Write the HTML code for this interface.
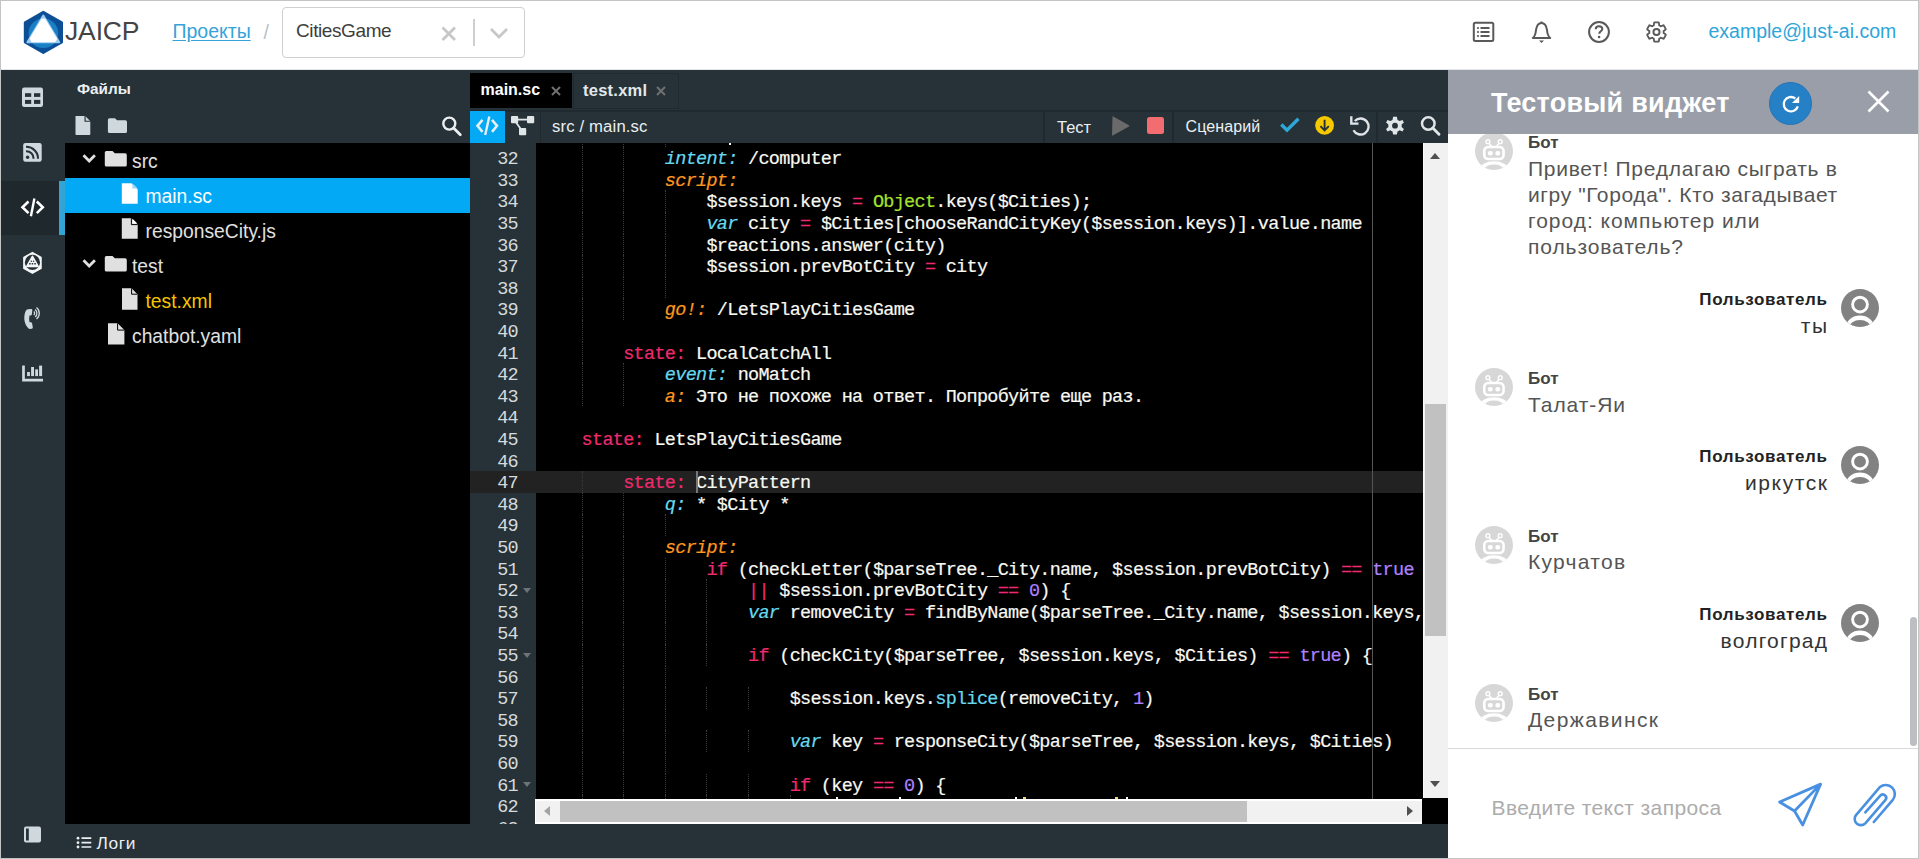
<!DOCTYPE html>
<html><head><meta charset="utf-8">
<style>
*{box-sizing:border-box;margin:0;padding:0}
html,body{width:1919px;height:859px;overflow:hidden;background:#fff;font-family:"Liberation Sans",sans-serif}
.a{position:absolute}
.t{position:absolute;white-space:pre;line-height:1}
#frame{position:absolute;left:0;top:0;width:1919px;height:859px;border:1px solid #c4c4c4;z-index:50;pointer-events:none}
/* header */
#hdr{left:0;top:0;width:1919px;height:70px;background:#fff;border-bottom:1px solid #e3e6e8}
/* dark */
#dark{left:0;top:70px;width:1448px;height:789px;background:#263238}
#rail{left:0;top:70px;width:65px;height:789px;background:#263238}
#tree{left:65px;top:143px;width:405px;height:681px;background:#000}
.row{position:absolute;left:65px;width:405px;height:35px}
.lbl{position:absolute;white-space:pre;font-size:19.3px;color:#e0e0e0;line-height:1}
/* code */
#gutter{left:470px;top:143px;width:66px;height:681px;background:#263238;overflow:hidden}
#code{left:536px;top:143px;width:887px;height:656px;background:#000;overflow:hidden}
.ln{position:absolute;margin-top:2px;left:0;width:48px;text-align:right;font-family:"Liberation Mono",monospace;font-size:18.5px;letter-spacing:-0.7px;line-height:21.6px;height:21.6px;color:#d5dadd}
.cl{position:absolute;margin-top:2px;left:4px;white-space:pre;font-family:"Liberation Mono",monospace;font-size:18.5px;letter-spacing:-0.7px;line-height:21.6px;height:21.6px;color:#f8f8f2;-webkit-text-stroke:0.2px currentColor}
.k{color:#ef2a6e}.c{color:#66d9ef;font-style:italic}.o{color:#fd971f;font-style:italic}.g{color:#a6e22e}.p{color:#ae81ff}.s{color:#66d9ef}.y{color:#e6db74}
.ig{position:absolute;width:0;border-left:1px dotted #3a3a3a}
.fold{position:absolute;left:523px;width:0;height:0;border-left:4px solid transparent;border-right:4px solid transparent;border-top:5px solid #6d7478}
/* widget */
#wid{left:1448px;top:70px;width:471px;height:789px;background:#fff}
.name{position:absolute;white-space:pre;font-weight:700;font-size:17px;line-height:1}
.msg{position:absolute;white-space:pre;font-size:21px;letter-spacing:0.7px;line-height:26px;color:#555}
</style></head><body>
<div id="frame"></div>

<!-- HEADER -->
<div id="hdr" class="a"></div>
<svg class="a" style="left:0;top:0" width="80" height="70" viewBox="0 0 80 70">
  <polygon points="43.3,12 61.8,22.6 61.8,42.2 43.3,52.8 25,42.2 25,22.6" fill="#0c4f97" stroke="#0c4f97" stroke-width="2.4" stroke-linejoin="round"/>
  <circle cx="43.4" cy="33.2" r="14.8" fill="#1a80c6"/>
  <defs><clipPath id="cc"><circle cx="43.4" cy="33.2" r="14.8"/></clipPath></defs>
  <polygon points="43.3,15.6 59.2,42.2 27.4,42.2" fill="#9acbf0" stroke="#9acbf0" stroke-width="2" stroke-linejoin="round"/>
  <polygon points="43.3,15.6 59.2,42.2 27.4,42.2" fill="#fff" clip-path="url(#cc)"/>
</svg>
<div class="t" style="left:65px;top:17.6px;font-size:26.5px;color:#444;letter-spacing:-0.15px">JAICP</div>
<div class="t" style="left:172.5px;top:21.5px;font-size:19.5px;color:#35a3d9;text-decoration:underline;text-underline-offset:2px">Проекты</div>
<div class="t" style="left:263.5px;top:22.8px;font-size:19.5px;color:#b8c2c8">/</div>
<div class="a" style="left:282px;top:7px;width:243px;height:51px;border:1px solid #cfcfcf;border-radius:4px;background:#fff"></div>
<div class="t" style="left:296px;top:20.6px;font-size:19px;letter-spacing:-0.4px;color:#3d3d3d">CitiesGame</div>
<svg class="a" style="left:438px;top:23px" width="22" height="22" viewBox="0 0 22 22"><path d="M4.5 4.5 L17 17 M17 4.5 L4.5 17" stroke="#c7c7c7" stroke-width="2.8"/></svg>
<div class="a" style="left:473px;top:19px;width:2px;height:27px;background:#cfcfcf"></div>
<svg class="a" style="left:488px;top:25px" width="22" height="16" viewBox="0 0 22 16"><path d="M3 4 L11 12 L19 4" stroke="#c7c7c7" stroke-width="2.8" fill="none"/></svg>
<!-- header icons -->
<svg class="a" style="left:1472px;top:21px" width="23" height="22" viewBox="0 0 23 22"><rect x="1.8" y="1.8" width="19.5" height="18.3" rx="1.5" fill="none" stroke="#595959" stroke-width="2"/><circle cx="6" cy="7" r="1.1" fill="#595959"/><circle cx="6" cy="11" r="1.1" fill="#595959"/><circle cx="6" cy="15" r="1.1" fill="#595959"/><path d="M8.5 7h9M8.5 11h9M8.5 15h9" stroke="#595959" stroke-width="1.9"/></svg>
<svg class="a" style="left:1530px;top:20px" width="23" height="24" viewBox="0 0 23 24"><path d="M11.5 1.5 v1.5 M11.5 3 C7.5 3 6.5 6.5 6 10 C5.6 14.5 4.8 16.5 2.8 18 H20.2 C18.2 16.5 17.4 14.5 17 10 C16.5 6.5 15.5 3 11.5 3 Z" fill="none" stroke="#595959" stroke-width="2" stroke-linejoin="round"/><path d="M9 20.5 h5 l-2.5 2.5z" fill="#595959"/></svg>
<svg class="a" style="left:1587px;top:20px" width="24" height="24" viewBox="0 0 24 24"><circle cx="12" cy="12" r="9.9" fill="none" stroke="#595959" stroke-width="2"/><path d="M8.7 9.2 C8.7 7.2 10.2 6.2 12 6.2 C13.8 6.2 15.3 7.3 15.3 9 C15.3 11.2 12.2 11.4 12.2 13.8" fill="none" stroke="#595959" stroke-width="2"/><circle cx="12.1" cy="17" r="1.3" fill="#595959"/></svg>
<svg class="a" style="left:1645px;top:20px" width="23" height="24" viewBox="0 0 24 24"><path d="M19.4 13c.04-.3.06-.65.06-1s-.02-.7-.06-1l2.1-1.65c.19-.15.24-.42.12-.64l-2-3.46c-.12-.22-.39-.3-.61-.22l-2.49 1c-.52-.4-1.08-.73-1.69-.98l-.38-2.65C14.46 2.18 14.25 2 14 2h-4c-.25 0-.46.18-.49.42l-.38 2.65c-.61.25-1.17.59-1.69.98l-2.49-1c-.23-.09-.49 0-.61.22l-2 3.46c-.13.22-.07.49.12.64L4.57 11c-.04.32-.07.66-.07 1s.03.68.07 1l-2.11 1.65c-.19.15-.24.42-.12.64l2 3.46c.12.22.39.3.61.22l2.49-1c.52.4 1.08.73 1.69.98l.38 2.65c.03.24.24.42.49.42h4c.25 0 .46-.18.49-.42l.38-2.65c.61-.25 1.17-.59 1.69-.98l2.49 1c.23.09.49 0 .61-.22l2-3.46c.12-.22.07-.49-.12-.64L19.4 13z" fill="none" stroke="#595959" stroke-width="1.9"/><circle cx="12" cy="12" r="3.2" fill="none" stroke="#595959" stroke-width="2"/></svg>
<div class="t" style="left:1708.5px;top:21.5px;font-size:19.5px;color:#2da5d9">example@just-ai.com</div>

<!-- DARK AREA -->
<div id="dark" class="a"></div>
<!-- rail -->
<div class="a" style="left:0;top:181px;width:65px;height:54px;background:#1f282d"></div>
<div class="a" style="left:59px;top:181px;width:6px;height:54px;background:#32a5d6"></div>
<svg class="a" style="left:20px;top:85px" width="26" height="25" viewBox="0 0 26 25"><rect x="2" y="2.5" width="21" height="19.5" rx="2.2" fill="#cfd8dc"/><rect x="5" y="8.2" width="6.2" height="3.7" fill="#263238"/><rect x="14" y="8.2" width="6.3" height="3.7" fill="#263238"/><rect x="5" y="14.9" width="6.2" height="4" fill="#263238"/><rect x="14" y="14.9" width="6.3" height="4" fill="#263238"/></svg>
<svg class="a" style="left:20px;top:140px" width="26" height="25" viewBox="0 0 26 25"><rect x="3.2" y="3.1" width="18.5" height="18.7" rx="2.2" fill="#cfd8dc"/><circle cx="7.6" cy="17.3" r="1.7" fill="#263238"/><path d="M6 11.2 A7.3 7.3 0 0 1 13.6 18.8" fill="none" stroke="#263238" stroke-width="2.1"/><path d="M6 6.8 A11.7 11.7 0 0 1 18 18.8" fill="none" stroke="#263238" stroke-width="2.1"/></svg>
<svg class="a" style="left:20px;top:195px" width="26" height="25" viewBox="0 0 26 25"><path d="M8.5 6.5 L2.5 12.3 L8.5 18.1 M16.8 6.5 L22.8 12.3 L16.8 18.1" fill="none" stroke="#fff" stroke-width="2.6"/><path d="M14.4 3.5 L10.9 21.3" stroke="#fff" stroke-width="2.4"/></svg>
<svg class="a" style="left:20px;top:250px" width="26" height="26" viewBox="0 0 26 26"><polygon points="12.44,2.6 21,7.4 21,18.4 12.44,23.2 3.9,18.4 3.9,7.4" fill="#f4f6f7" stroke="#f4f6f7" stroke-width="1.5" stroke-linejoin="round"/><circle cx="12.44" cy="12.4" r="7.6" fill="#263238"/><polygon points="12.44,6.3 18.1,16.4 6.8,16.4" fill="#f4f6f7" stroke="#f4f6f7" stroke-width="1.6" stroke-linejoin="round"/><g fill="#263238"><circle cx="11.3" cy="11.2" r="0.7"/><circle cx="13.6" cy="11.2" r="0.7"/><rect x="9.1" y="13" width="1.5" height="1.5"/><rect x="11.7" y="13" width="1.5" height="1.5"/><rect x="14.3" y="13" width="1.5" height="1.5"/></g></svg>
<svg class="a" style="left:20px;top:305px" width="26" height="26" viewBox="0 0 26 26"><path d="M6.9 4.6 Q8.2 3.9 11.2 4 Q12.5 4.1 12.3 5.2 L11.8 9.6 Q11.6 10.5 10.7 10.5 L9.5 10.6 Q8.8 13.9 9.5 17.3 L10.8 17.3 Q11.7 17.3 12 18.1 L12.8 22.3 Q12.9 23.5 11.9 23.8 L9.2 24 Q4.9 20.7 4.3 14.3 Q4.1 7.2 6.9 4.6 Z" fill="#cfd8dc"/><path d="M13.84 6.46 A2.6 2.6 0 0 1 13.84 10.14 M15.15 4.55 A4.9 4.9 0 0 1 15.15 12.05 M16.49 2.55 A7.3 7.3 0 0 1 16.49 14.05" fill="none" stroke="#cfd8dc" stroke-width="1.3"/></svg>
<svg class="a" style="left:20px;top:362px" width="26" height="24" viewBox="0 0 26 24"><path d="M3.5 3.6 V18.2 H23" fill="none" stroke="#cfd8dc" stroke-width="2.7"/><rect x="7.1" y="10" width="2.8" height="4.1" fill="#cfd8dc"/><rect x="11.1" y="5" width="2.9" height="9.1" fill="#cfd8dc"/><rect x="15.2" y="7.4" width="2.8" height="6.7" fill="#cfd8dc"/><rect x="19.1" y="3.6" width="3" height="10.5" fill="#cfd8dc"/></svg>
<svg class="a" style="left:20px;top:823px" width="26" height="24" viewBox="0 0 26 24"><rect x="4" y="3.5" width="17" height="16" rx="2" fill="#cfd8dc"/><rect x="6" y="5.5" width="2.8" height="12" fill="#263238"/></svg>

<!-- file panel -->
<div class="t" style="left:77px;top:80.7px;font-size:15.3px;font-weight:700;color:#eceff1">Файлы</div>
<svg class="a" style="left:73px;top:114px" width="20" height="23" viewBox="0 0 20 23"><path d="M2.5 2 H11.5 L17.3 7.8 V20.3 Q17.3 21 16.6 21 H3.2 Q2.5 21 2.5 20.3 Z" fill="#cfd8dc"/><path d="M11.5 2 V7.8 H17.3" fill="#263238"/><path d="M12.7 2.6 L16.8 6.7 H12.7 Z" fill="#cfd8dc"/></svg>
<svg class="a" style="left:106px;top:116px" width="24" height="20" viewBox="0 0 24 20"><path d="M1.9 3.8 Q1.9 2.2 3.5 2.2 H9 L11 4.3 H19.4 Q21 4.3 21 5.9 V15.5 Q21 17 19.4 17 H3.5 Q1.9 17 1.9 15.5 Z" fill="#cfd8dc"/></svg>
<svg class="a" style="left:440px;top:114px" width="24" height="24" viewBox="0 0 24 24"><circle cx="9.3" cy="9.6" r="6" fill="none" stroke="#eceff1" stroke-width="2.4"/><path d="M13.6 14 L20.3 20.7" stroke="#eceff1" stroke-width="2.8" stroke-linecap="round"/></svg>
<div id="tree" class="a"></div>
<div class="a" style="left:65px;top:178px;width:405px;height:35px;background:#03a9f4"></div>
<svg class="a" style="left:65px;top:143px" width="405" height="210" viewBox="0 0 405 210">
  <defs>
    <g id="chev"><path d="M0 0 L6.7 6.7 L13.4 0" fill="none" stroke-width="3"/></g>
  </defs>
  <!-- row0 src -->
  <path d="M18.5 12.3 L24.2 18 L29.9 12.3" fill="none" stroke="#e0e0e0" stroke-width="2.8"/>
  <path d="M39.8 9.6 Q39.8 8 41.4 8 H47.5 L49.8 10.3 H60.2 Q61.8 10.3 61.8 11.9 V22 Q61.8 23.6 60.2 23.6 H41.4 Q39.8 23.6 39.8 22 Z" fill="#e0e0e0"/>
  <!-- row3 test -->
  <path d="M18.5 117.3 L24.2 123 L29.9 117.3" fill="none" stroke="#e0e0e0" stroke-width="2.8"/>
  <path d="M39.8 114.6 Q39.8 113 41.4 113 H47.5 L49.8 115.3 H60.2 Q61.8 115.3 61.8 116.9 V127 Q61.8 128.6 60.2 128.6 H41.4 Q39.8 128.6 39.8 127 Z" fill="#e0e0e0"/>
  <!-- file icons -->
  <path d="M56.8 40.3 H66.4 L72.7 46.6 V60.8 H56.8 Z" fill="#fff"/><path d="M67.4 40.3 L72.7 45.6 H67.4 Z" fill="#9ad8f7"/>
  <path d="M56.8 75.3 H66.4 L72.7 81.6 V95.8 H56.8 Z" fill="#e0e0e0"/><path d="M67.6 75.8 L72.3 80.5 H67.6 Z" fill="#fff"/><path d="M66.4 75.3 V81.6 H72.7" fill="none" stroke="#000" stroke-width="1"/>
  <path d="M57 145.3 H66.6 L72.5 151.2 V166.8 H57 Z" fill="#e0e0e0"/><path d="M66.6 145.3 V151.2 H72.5" fill="none" stroke="#000" stroke-width="1"/>
  <path d="M43 180.3 H52.6 L59.4 187.1 V201.6 H43 Z" fill="#e0e0e0"/><path d="M52.6 180.3 V187.1 H59.4" fill="none" stroke="#000" stroke-width="1"/>
</svg>
<div class="lbl" style="left:132px;top:151.5px">src</div>
<div class="lbl" style="left:145.5px;top:186.5px;color:#fff">main.sc</div>
<div class="lbl" style="left:145.5px;top:221.5px">responseCity.js</div>
<div class="lbl" style="left:132px;top:256.5px">test</div>
<div class="lbl" style="left:145.5px;top:291.5px;color:#f5c400">test.xml</div>
<div class="lbl" style="left:132px;top:326.5px">chatbot.yaml</div>

<!-- EDITOR -->

<div class="a" style="left:470px;top:73px;width:102px;height:35px;background:#000"></div>
<div class="t" style="left:480.5px;top:82.2px;font-size:16px;font-weight:700;color:#fff">main.sc</div>
<svg class="a" style="left:550px;top:85px" width="12" height="12" viewBox="0 0 12 12"><path d="M2 2 L10 10 M10 2 L2 10" stroke="#707070" stroke-width="2"/></svg>
<div class="a" style="left:573px;top:72.5px;width:106px;height:36px;border:1px solid #1f292e;background:#263238"></div>
<div class="t" style="left:583px;top:82px;font-size:16.5px;font-weight:700;letter-spacing:0.25px;color:#e3e8eb">test.xml</div>
<svg class="a" style="left:655px;top:85px" width="12" height="12" viewBox="0 0 12 12"><path d="M2 2 L10 10 M10 2 L2 10" stroke="#707070" stroke-width="2"/></svg>
<div class="a" style="left:470px;top:109.5px;width:978px;height:2px;background:#20292e"></div>
<!-- toolbar -->
<div class="a" style="left:470px;top:111px;width:35px;height:32px;background:#03a9f4"></div>
<svg class="a" style="left:473px;top:113px" width="30" height="26" viewBox="0 0 30 26"><path d="M9.5 6.8 L4.5 12.8 L9.5 18.8 M19 6.8 L24 12.8 L19 18.8" fill="none" stroke="#e4eef3" stroke-width="2.6"/><path d="M16.3 3.5 L12.2 22" stroke="#e4eef3" stroke-width="2.4"/></svg>
<svg class="a" style="left:508px;top:113px" width="30" height="26" viewBox="0 0 30 26"><rect x="3" y="3" width="7.2" height="7.2" rx="1" fill="#e0e5e8"/><rect x="19" y="3" width="7.2" height="7.2" rx="1" fill="#e0e5e8"/><rect x="11" y="15" width="7.2" height="7.2" rx="1" fill="#e0e5e8"/><path d="M8 6.6 H20" stroke="#e0e5e8" stroke-width="1.8"/><path d="M7 8 L13.5 17" stroke="#e0e5e8" stroke-width="1.8"/></svg>
<div class="a" style="left:540px;top:111px;width:1px;height:32px;background:#20292e"></div>
<div class="t" style="left:552px;top:119.2px;font-size:16.7px;letter-spacing:0.15px;color:#eceff1">src / main.sc</div>
<div class="a" style="left:1043px;top:111px;width:2px;height:32px;background:#20292e"></div>
<div class="t" style="left:1057px;top:119px;font-size:16.5px;color:#eceff1">Тест</div>
<svg class="a" style="left:1108px;top:113px" width="26" height="26" viewBox="0 0 26 26"><path d="M4.5 3.5 Q4 3 4.8 3.3 L21 12.2 Q21.8 12.8 21 13.4 L4.8 22.4 Q4 22.8 4 22 Z" fill="#6a6a6a"/></svg>
<div class="a" style="left:1147px;top:117px;width:17px;height:17px;border-radius:2.5px;background:#f26c70"></div>
<div class="a" style="left:1172px;top:111px;width:2px;height:32px;background:#20292e"></div>
<div class="t" style="left:1185.5px;top:119.3px;font-size:16px;letter-spacing:0.1px;color:#eceff1">Сценарий</div>
<svg class="a" style="left:1277px;top:114px" width="26" height="22" viewBox="0 0 26 22"><path d="M4.3 10.5 L10 16.2 L21.5 4.7" fill="none" stroke="#2ea8d8" stroke-width="3.4"/></svg>
<svg class="a" style="left:1313px;top:114px" width="24" height="24" viewBox="0 0 24 24"><circle cx="11.6" cy="11.4" r="9.4" fill="#f5c800"/><path d="M11.6 5.8 V16.3 M7.4 12.1 L11.6 16.3 L15.8 12.1" fill="none" stroke="#263238" stroke-width="1.9"/></svg>
<svg class="a" style="left:1347px;top:113px" width="26" height="26" viewBox="0 0 26 26"><path d="M7.8 8 A8 8 0 1 1 6.5 17.2" fill="none" stroke="#e0e5e8" stroke-width="2.4"/><path d="M4.3 3.2 V10.6 H11.5" fill="none" stroke="#e0e5e8" stroke-width="2.4"/></svg>
<div class="a" style="left:1376px;top:111px;width:2px;height:32px;background:#20292e"></div>
<svg class="a" style="left:1383px;top:114px" width="24" height="24" viewBox="0 0 24 24"><path d="M12 1.6 L13.9 1.6 L14.5 4.7 A7.6 7.6 0 0 1 16.6 5.9 L19.5 4.8 L20.9 7.2 L18.6 9.3 A7.6 7.6 0 0 1 18.6 11.7 L20.9 13.8 L19.5 16.2 L16.6 15.1 A7.6 7.6 0 0 1 14.5 16.3 L13.9 19.4 H10.1 L9.5 16.3 A7.6 7.6 0 0 1 7.4 15.1 L4.5 16.2 L3.1 13.8 L5.4 11.7 A7.6 7.6 0 0 1 5.4 9.3 L3.1 7.2 L4.5 4.8 L7.4 5.9 A7.6 7.6 0 0 1 9.5 4.7 L10.1 1.6 Z" fill="#e0e5e8" transform="translate(0,1.2)"/><circle cx="12" cy="11.7" r="2.9" fill="#263238"/></svg>
<svg class="a" style="left:1418px;top:113px" width="26" height="26" viewBox="0 0 26 26"><circle cx="10.3" cy="10.5" r="6.3" fill="none" stroke="#e0e5e8" stroke-width="2.5"/><path d="M14.8 15 L21 21.2" stroke="#e0e5e8" stroke-width="2.9" stroke-linecap="round"/></svg>

<!-- gutter + code -->
<div id="gutter" class="a">
<div class="a" style="left:0;top:328.2px;width:66px;height:21.6px;background:#222"></div>
<div class="ln" style="top:-17.4px">31</div>
<div class="ln" style="top:4.2px">32</div>
<div class="ln" style="top:25.8px">33</div>
<div class="ln" style="top:47.4px">34</div>
<div class="ln" style="top:69.0px">35</div>
<div class="ln" style="top:90.6px">36</div>
<div class="ln" style="top:112.2px">37</div>
<div class="ln" style="top:133.8px">38</div>
<div class="ln" style="top:155.4px">39</div>
<div class="ln" style="top:177.0px">40</div>
<div class="ln" style="top:198.6px">41</div>
<div class="ln" style="top:220.2px">42</div>
<div class="ln" style="top:241.8px">43</div>
<div class="ln" style="top:263.4px">44</div>
<div class="ln" style="top:285.0px">45</div>
<div class="ln" style="top:306.6px">46</div>
<div class="ln" style="top:328.2px">47</div>
<div class="ln" style="top:349.8px">48</div>
<div class="ln" style="top:371.4px">49</div>
<div class="ln" style="top:393.0px">50</div>
<div class="ln" style="top:414.6px">51</div>
<div class="ln" style="top:436.2px">52</div>
<div class="ln" style="top:457.8px">53</div>
<div class="ln" style="top:479.4px">54</div>
<div class="ln" style="top:501.0px">55</div>
<div class="ln" style="top:522.6px">56</div>
<div class="ln" style="top:544.2px">57</div>
<div class="ln" style="top:565.8px">58</div>
<div class="ln" style="top:587.4px">59</div>
<div class="ln" style="top:609.0px">60</div>
<div class="ln" style="top:630.6px">61</div>
<div class="ln" style="top:652.2px">62</div>
<div class="ln" style="top:673.8px">63</div>
</div>
<div class="fold" style="top:587.7px"></div>
<div class="fold" style="top:652.5px"></div>
<div class="fold" style="top:782.1px"></div>
<div id="code" class="a">
<div class="a" style="left:0;top:328.2px;width:887px;height:21.6px;background:#222"></div>
<div class="a" style="left:836px;top:0;width:1px;height:656px;background:#555"></div>
<div class="ig" style="left:45.6px;top:-17.4px;height:21.6px"></div>
<div class="ig" style="left:87.2px;top:-17.4px;height:21.6px"></div>
<div class="ig" style="left:128.8px;top:-17.4px;height:21.6px"></div>
<div class="a" style="left:193px;top:0px;width:2px;height:2px;background:#f8f8f2"></div>
<div class="ig" style="left:45.6px;top:4.2px;height:21.6px"></div>
<div class="ig" style="left:87.2px;top:4.2px;height:21.6px"></div>
<div class="cl" style="top:4.2px">            <span class="c">intent:</span> /computer</div>
<div class="ig" style="left:45.6px;top:25.8px;height:21.6px"></div>
<div class="ig" style="left:87.2px;top:25.8px;height:21.6px"></div>
<div class="cl" style="top:25.8px">            <span class="o">script:</span></div>
<div class="ig" style="left:45.6px;top:47.4px;height:21.6px"></div>
<div class="ig" style="left:87.2px;top:47.4px;height:21.6px"></div>
<div class="ig" style="left:128.8px;top:47.4px;height:21.6px"></div>
<div class="cl" style="top:47.4px">                $session.keys <span class="k">=</span> <span class="g">Object</span>.keys($Cities);</div>
<div class="ig" style="left:45.6px;top:69.0px;height:21.6px"></div>
<div class="ig" style="left:87.2px;top:69.0px;height:21.6px"></div>
<div class="ig" style="left:128.8px;top:69.0px;height:21.6px"></div>
<div class="cl" style="top:69.0px">                <span class="c">var</span> city <span class="k">=</span> $Cities[chooseRandCityKey($session.keys)].value.name</div>
<div class="ig" style="left:45.6px;top:90.6px;height:21.6px"></div>
<div class="ig" style="left:87.2px;top:90.6px;height:21.6px"></div>
<div class="ig" style="left:128.8px;top:90.6px;height:21.6px"></div>
<div class="cl" style="top:90.6px">                $reactions.answer(city)</div>
<div class="ig" style="left:45.6px;top:112.2px;height:21.6px"></div>
<div class="ig" style="left:87.2px;top:112.2px;height:21.6px"></div>
<div class="ig" style="left:128.8px;top:112.2px;height:21.6px"></div>
<div class="cl" style="top:112.2px">                $session.prevBotCity <span class="k">=</span> city</div>
<div class="ig" style="left:45.6px;top:133.8px;height:21.6px"></div>
<div class="ig" style="left:87.2px;top:133.8px;height:21.6px"></div>
<div class="ig" style="left:128.8px;top:133.8px;height:21.6px"></div>
<div class="cl" style="top:133.8px"></div>
<div class="ig" style="left:45.6px;top:155.4px;height:21.6px"></div>
<div class="ig" style="left:87.2px;top:155.4px;height:21.6px"></div>
<div class="cl" style="top:155.4px">            <span class="o">go!:</span> /LetsPlayCitiesGame</div>
<div class="ig" style="left:45.6px;top:177.0px;height:21.6px"></div>
<div class="cl" style="top:177.0px"></div>
<div class="ig" style="left:45.6px;top:198.6px;height:21.6px"></div>
<div class="cl" style="top:198.6px">        <span class="k">state:</span> LocalCatchAll</div>
<div class="ig" style="left:45.6px;top:220.2px;height:21.6px"></div>
<div class="ig" style="left:87.2px;top:220.2px;height:21.6px"></div>
<div class="cl" style="top:220.2px">            <span class="c">event:</span> noMatch</div>
<div class="ig" style="left:45.6px;top:241.8px;height:21.6px"></div>
<div class="ig" style="left:87.2px;top:241.8px;height:21.6px"></div>
<div class="cl" style="top:241.8px">            <span class="o">a:</span> Это не похоже на ответ. Попробуйте еще раз.</div>
<div class="cl" style="top:263.4px"></div>
<div class="cl" style="top:285.0px">    <span class="k">state:</span> LetsPlayCitiesGame</div>
<div class="cl" style="top:306.6px"></div>
<div class="ig" style="left:45.6px;top:328.2px;height:21.6px"></div>
<div class="cl" style="top:328.2px">        <span class="k">state:</span> CityPattern</div>
<div class="ig" style="left:45.6px;top:349.8px;height:21.6px"></div>
<div class="ig" style="left:87.2px;top:349.8px;height:21.6px"></div>
<div class="cl" style="top:349.8px">            <span class="c">q:</span> * $City *</div>
<div class="ig" style="left:45.6px;top:371.4px;height:21.6px"></div>
<div class="ig" style="left:87.2px;top:371.4px;height:21.6px"></div>
<div class="ig" style="left:128.8px;top:371.4px;height:21.6px"></div>
<div class="cl" style="top:371.4px"></div>
<div class="ig" style="left:45.6px;top:393.0px;height:21.6px"></div>
<div class="ig" style="left:87.2px;top:393.0px;height:21.6px"></div>
<div class="cl" style="top:393.0px">            <span class="o">script:</span></div>
<div class="ig" style="left:45.6px;top:414.6px;height:21.6px"></div>
<div class="ig" style="left:87.2px;top:414.6px;height:21.6px"></div>
<div class="ig" style="left:128.8px;top:414.6px;height:21.6px"></div>
<div class="cl" style="top:414.6px">                <span class="k">if</span> (checkLetter($parseTree._City.name, $session.prevBotCity) <span class="k">==</span> <span class="p">true</span></div>
<div class="ig" style="left:45.6px;top:436.2px;height:21.6px"></div>
<div class="ig" style="left:87.2px;top:436.2px;height:21.6px"></div>
<div class="ig" style="left:128.8px;top:436.2px;height:21.6px"></div>
<div class="ig" style="left:170.4px;top:436.2px;height:21.6px"></div>
<div class="cl" style="top:436.2px">                    <span class="k">||</span> $session.prevBotCity <span class="k">==</span> <span class="p">0</span>) {</div>
<div class="ig" style="left:45.6px;top:457.8px;height:21.6px"></div>
<div class="ig" style="left:87.2px;top:457.8px;height:21.6px"></div>
<div class="ig" style="left:128.8px;top:457.8px;height:21.6px"></div>
<div class="ig" style="left:170.4px;top:457.8px;height:21.6px"></div>
<div class="cl" style="top:457.8px">                    <span class="c">var</span> removeCity <span class="k">=</span> findByName($parseTree._City.name, $session.keys, $Cities)</div>
<div class="ig" style="left:45.6px;top:479.4px;height:21.6px"></div>
<div class="ig" style="left:87.2px;top:479.4px;height:21.6px"></div>
<div class="ig" style="left:128.8px;top:479.4px;height:21.6px"></div>
<div class="ig" style="left:170.4px;top:479.4px;height:21.6px"></div>
<div class="cl" style="top:479.4px"></div>
<div class="ig" style="left:45.6px;top:501.0px;height:21.6px"></div>
<div class="ig" style="left:87.2px;top:501.0px;height:21.6px"></div>
<div class="ig" style="left:128.8px;top:501.0px;height:21.6px"></div>
<div class="ig" style="left:170.4px;top:501.0px;height:21.6px"></div>
<div class="cl" style="top:501.0px">                    <span class="k">if</span> (checkCity($parseTree, $session.keys, $Cities) <span class="k">==</span> <span class="p">true</span>) {</div>
<div class="ig" style="left:45.6px;top:522.6px;height:21.6px"></div>
<div class="ig" style="left:87.2px;top:522.6px;height:21.6px"></div>
<div class="ig" style="left:128.8px;top:522.6px;height:21.6px"></div>
<div class="cl" style="top:522.6px"></div>
<div class="ig" style="left:45.6px;top:544.2px;height:21.6px"></div>
<div class="ig" style="left:87.2px;top:544.2px;height:21.6px"></div>
<div class="ig" style="left:128.8px;top:544.2px;height:21.6px"></div>
<div class="ig" style="left:170.4px;top:544.2px;height:21.6px"></div>
<div class="ig" style="left:212.0px;top:544.2px;height:21.6px"></div>
<div class="cl" style="top:544.2px">                        $session.keys.<span class="s">splice</span>(removeCity, <span class="p">1</span>)</div>
<div class="ig" style="left:45.6px;top:565.8px;height:21.6px"></div>
<div class="ig" style="left:87.2px;top:565.8px;height:21.6px"></div>
<div class="ig" style="left:128.8px;top:565.8px;height:21.6px"></div>
<div class="cl" style="top:565.8px"></div>
<div class="ig" style="left:45.6px;top:587.4px;height:21.6px"></div>
<div class="ig" style="left:87.2px;top:587.4px;height:21.6px"></div>
<div class="ig" style="left:128.8px;top:587.4px;height:21.6px"></div>
<div class="ig" style="left:170.4px;top:587.4px;height:21.6px"></div>
<div class="ig" style="left:212.0px;top:587.4px;height:21.6px"></div>
<div class="cl" style="top:587.4px">                        <span class="c">var</span> key <span class="k">=</span> responseCity($parseTree, $session.keys, $Cities)</div>
<div class="ig" style="left:45.6px;top:609.0px;height:21.6px"></div>
<div class="ig" style="left:87.2px;top:609.0px;height:21.6px"></div>
<div class="ig" style="left:128.8px;top:609.0px;height:21.6px"></div>
<div class="cl" style="top:609.0px"></div>
<div class="ig" style="left:45.6px;top:630.6px;height:21.6px"></div>
<div class="ig" style="left:87.2px;top:630.6px;height:21.6px"></div>
<div class="ig" style="left:128.8px;top:630.6px;height:21.6px"></div>
<div class="ig" style="left:170.4px;top:630.6px;height:21.6px"></div>
<div class="ig" style="left:212.0px;top:630.6px;height:21.6px"></div>
<div class="cl" style="top:630.6px">                        <span class="k">if</span> (key <span class="k">==</span> <span class="p">0</span>) {</div>
<div class="ig" style="left:45.6px;top:652.2px;height:21.6px"></div>
<div class="ig" style="left:87.2px;top:652.2px;height:21.6px"></div>
<div class="ig" style="left:128.8px;top:652.2px;height:21.6px"></div>
<div class="ig" style="left:170.4px;top:652.2px;height:21.6px"></div>
<div class="ig" style="left:212.0px;top:652.2px;height:21.6px"></div>
<div class="ig" style="left:253.6px;top:652.2px;height:21.6px"></div>
<div class="cl" style="top:652.2px">                            $reactions.answer(<span class="y">&quot;Не знаю&quot;</span>)</div>
<div class="ig" style="left:45.6px;top:673.8px;height:21.6px"></div>
<div class="ig" style="left:87.2px;top:673.8px;height:21.6px"></div>
<div class="ig" style="left:128.8px;top:673.8px;height:21.6px"></div>
<div class="ig" style="left:170.4px;top:673.8px;height:21.6px"></div>
<div class="ig" style="left:212.0px;top:673.8px;height:21.6px"></div>
<div class="ig" style="left:253.6px;top:673.8px;height:21.6px"></div>
<div class="cl" style="top:673.8px">                            return</div>
<div class="a" style="left:300px;top:654px;width:2px;height:2px;background:#f8f8f2"></div><div class="a" style="left:363px;top:654px;width:2px;height:2px;background:#f8f8f2"></div><div class="a" style="left:479px;top:654px;width:2px;height:2px;background:#f8f8f2"></div><div class="a" style="left:487px;top:654px;width:3px;height:2px;background:#e6db74"></div><div class="a" style="left:579px;top:654px;width:3px;height:2px;background:#e6db74"></div><div class="a" style="left:590px;top:654px;width:2px;height:2px;background:#f8f8f2"></div>
<div class="a" style="left:159.5px;top:328.2px;width:2px;height:21.6px;background:#777"></div>
</div>
<!-- v scrollbar -->
<div class="a" style="left:1423px;top:143px;width:25px;height:655px;background:#f1f1f1;border-left:1px solid #fafafa"></div>
<div class="a" style="left:1425px;top:404px;width:21px;height:232px;background:#c1c1c1"></div>
<div class="a" style="left:1430px;top:153px;width:0;height:0;border-left:5.5px solid transparent;border-right:5.5px solid transparent;border-bottom:6px solid #505050"></div>
<div class="a" style="left:1430px;top:781px;width:0;height:0;border-left:5.5px solid transparent;border-right:5.5px solid transparent;border-top:6px solid #505050"></div>
<!-- h scrollbar -->
<div class="a" style="left:535px;top:799px;width:887px;height:25px;background:#f1f1f1;border:1px solid #fff;border-width:2px 0 2px 1px"></div>
<div class="a" style="left:560px;top:801px;width:687px;height:21px;background:#c1c1c1"></div>
<div class="a" style="left:544px;top:806px;width:0;height:0;border-top:5.5px solid transparent;border-bottom:5.5px solid transparent;border-right:6px solid #a3a3a3"></div>
<div class="a" style="left:1407px;top:806px;width:0;height:0;border-top:5.5px solid transparent;border-bottom:5.5px solid transparent;border-left:6px solid #505050"></div>
<div class="a" style="left:1422px;top:798px;width:26px;height:26px;background:#000"></div>
<!-- bottom bar -->
<svg class="a" style="left:75px;top:835px" width="18" height="16" viewBox="0 0 18 16"><circle cx="3" cy="3.2" r="1.4" fill="#eceff1"/><circle cx="3" cy="7.7" r="1.4" fill="#eceff1"/><circle cx="3" cy="12" r="1.4" fill="#eceff1"/><path d="M6.5 3.2 H16.3 M6.5 7.7 H16.3 M6.5 12 H16.3" stroke="#eceff1" stroke-width="1.7"/></svg>
<div class="t" style="left:96.5px;top:834.8px;font-size:17.3px;letter-spacing:0.7px;color:#eceff1">Логи</div>

<!-- WIDGET -->
<div id="wid" class="a"></div>
<div class="a" style="left:1448px;top:70px;width:471px;height:680px;overflow:hidden">
<div style="position:absolute;left:-1448px;top:-70px;width:1919px;height:859px">
<svg class="a" style="left:1474px;top:130.8px" width="40" height="40" viewBox="0 0 40 40"><defs><clipPath id="bc150_5"><circle cx="20" cy="20" r="19"/></clipPath></defs><circle cx="20" cy="20" r="19" fill="#d7d7d7"/><g clip-path="url(#bc150_5)"><circle cx="13.9" cy="10.7" r="1.9" fill="none" stroke="#fff" stroke-width="1.4"/><circle cx="26.2" cy="10.7" r="1.9" fill="none" stroke="#fff" stroke-width="1.4"/><path d="M15 12.3 L17.6 15.2 M25.1 12.3 L22.5 15.2" stroke="#fff" stroke-width="1.4"/><rect x="10.25" y="16.05" width="19.3" height="11.9" rx="4" fill="#d7d7d7" stroke="#fff" stroke-width="2.6"/><rect x="13.9" y="20" width="4.9" height="4.6" rx="2" fill="#fff"/><rect x="21.3" y="20" width="4.9" height="4.6" rx="2" fill="#fff"/><ellipse cx="20" cy="38.5" rx="14.5" ry="8.3" fill="#fff"/><ellipse cx="20" cy="38.6" rx="9.5" ry="5.1" fill="#d7d7d7"/></g></svg>
<div class="name" style="left:1528px;top:133.9px;color:#444">Бот</div>
<svg class="a" style="left:1474px;top:366.6px" width="40" height="40" viewBox="0 0 40 40"><defs><clipPath id="bc386_3"><circle cx="20" cy="20" r="19"/></clipPath></defs><circle cx="20" cy="20" r="19" fill="#d7d7d7"/><g clip-path="url(#bc386_3)"><circle cx="13.9" cy="10.7" r="1.9" fill="none" stroke="#fff" stroke-width="1.4"/><circle cx="26.2" cy="10.7" r="1.9" fill="none" stroke="#fff" stroke-width="1.4"/><path d="M15 12.3 L17.6 15.2 M25.1 12.3 L22.5 15.2" stroke="#fff" stroke-width="1.4"/><rect x="10.25" y="16.05" width="19.3" height="11.9" rx="4" fill="#d7d7d7" stroke="#fff" stroke-width="2.6"/><rect x="13.9" y="20" width="4.9" height="4.6" rx="2" fill="#fff"/><rect x="21.3" y="20" width="4.9" height="4.6" rx="2" fill="#fff"/><ellipse cx="20" cy="38.5" rx="14.5" ry="8.3" fill="#fff"/><ellipse cx="20" cy="38.6" rx="9.5" ry="5.1" fill="#d7d7d7"/></g></svg>
<div class="name" style="left:1528px;top:369.7px;color:#444">Бот</div>
<svg class="a" style="left:1474px;top:524.5px" width="40" height="40" viewBox="0 0 40 40"><defs><clipPath id="bc544_2"><circle cx="20" cy="20" r="19"/></clipPath></defs><circle cx="20" cy="20" r="19" fill="#d7d7d7"/><g clip-path="url(#bc544_2)"><circle cx="13.9" cy="10.7" r="1.9" fill="none" stroke="#fff" stroke-width="1.4"/><circle cx="26.2" cy="10.7" r="1.9" fill="none" stroke="#fff" stroke-width="1.4"/><path d="M15 12.3 L17.6 15.2 M25.1 12.3 L22.5 15.2" stroke="#fff" stroke-width="1.4"/><rect x="10.25" y="16.05" width="19.3" height="11.9" rx="4" fill="#d7d7d7" stroke="#fff" stroke-width="2.6"/><rect x="13.9" y="20" width="4.9" height="4.6" rx="2" fill="#fff"/><rect x="21.3" y="20" width="4.9" height="4.6" rx="2" fill="#fff"/><ellipse cx="20" cy="38.5" rx="14.5" ry="8.3" fill="#fff"/><ellipse cx="20" cy="38.6" rx="9.5" ry="5.1" fill="#d7d7d7"/></g></svg>
<div class="name" style="left:1528px;top:527.6px;color:#444">Бот</div>
<svg class="a" style="left:1474px;top:682.5px" width="40" height="40" viewBox="0 0 40 40"><defs><clipPath id="bc702_2"><circle cx="20" cy="20" r="19"/></clipPath></defs><circle cx="20" cy="20" r="19" fill="#d7d7d7"/><g clip-path="url(#bc702_2)"><circle cx="13.9" cy="10.7" r="1.9" fill="none" stroke="#fff" stroke-width="1.4"/><circle cx="26.2" cy="10.7" r="1.9" fill="none" stroke="#fff" stroke-width="1.4"/><path d="M15 12.3 L17.6 15.2 M25.1 12.3 L22.5 15.2" stroke="#fff" stroke-width="1.4"/><rect x="10.25" y="16.05" width="19.3" height="11.9" rx="4" fill="#d7d7d7" stroke="#fff" stroke-width="2.6"/><rect x="13.9" y="20" width="4.9" height="4.6" rx="2" fill="#fff"/><rect x="21.3" y="20" width="4.9" height="4.6" rx="2" fill="#fff"/><ellipse cx="20" cy="38.5" rx="14.5" ry="8.3" fill="#fff"/><ellipse cx="20" cy="38.6" rx="9.5" ry="5.1" fill="#d7d7d7"/></g></svg>
<div class="name" style="left:1528px;top:685.6px;color:#444">Бот</div>
<svg class="a" style="left:1840px;top:287.6px" width="40" height="40" viewBox="0 0 40 40"><defs><clipPath id="uc307_6"><circle cx="20" cy="20" r="19"/></clipPath></defs><circle cx="20" cy="20" r="19" fill="#828282"/><g clip-path="url(#uc307_6)"><circle cx="20" cy="16.6" r="7.4" fill="none" stroke="#fff" stroke-width="2.9"/><ellipse cx="20" cy="39" rx="14" ry="11.4" fill="#fff"/><ellipse cx="20" cy="40" rx="10.8" ry="8" fill="#828282"/></g></svg>
<div class="name" style="right:92px;top:290.9px;color:#222;letter-spacing:0.65px;margin-right:-0.65px">Пользователь</div>
<svg class="a" style="left:1840px;top:445.1px" width="40" height="40" viewBox="0 0 40 40"><defs><clipPath id="uc465_1"><circle cx="20" cy="20" r="19"/></clipPath></defs><circle cx="20" cy="20" r="19" fill="#828282"/><g clip-path="url(#uc465_1)"><circle cx="20" cy="16.6" r="7.4" fill="none" stroke="#fff" stroke-width="2.9"/><ellipse cx="20" cy="39" rx="14" ry="11.4" fill="#fff"/><ellipse cx="20" cy="40" rx="10.8" ry="8" fill="#828282"/></g></svg>
<div class="name" style="right:92px;top:448.4px;color:#222;letter-spacing:0.65px;margin-right:-0.65px">Пользователь</div>
<svg class="a" style="left:1840px;top:603.0px" width="40" height="40" viewBox="0 0 40 40"><defs><clipPath id="uc623_0"><circle cx="20" cy="20" r="19"/></clipPath></defs><circle cx="20" cy="20" r="19" fill="#828282"/><g clip-path="url(#uc623_0)"><circle cx="20" cy="16.6" r="7.4" fill="none" stroke="#fff" stroke-width="2.9"/><ellipse cx="20" cy="39" rx="14" ry="11.4" fill="#fff"/><ellipse cx="20" cy="40" rx="10.8" ry="8" fill="#828282"/></g></svg>
<div class="name" style="right:92px;top:606.3px;color:#222;letter-spacing:0.65px;margin-right:-0.65px">Пользователь</div>
<div class="msg" style="left:1528px;top:155.7px;letter-spacing:0.73px">Привет! Предлагаю сыграть в</div>
<div class="msg" style="left:1528px;top:181.7px;letter-spacing:0.61px">игру &quot;Города&quot;. Кто загадывает</div>
<div class="msg" style="left:1528px;top:207.7px;letter-spacing:0.97px">город: компьютер или</div>
<div class="msg" style="left:1528px;top:233.7px;letter-spacing:0.9px">пользователь?</div>
<div class="msg" style="left:1528px;top:391.5px;letter-spacing:0.93px">Талат-Яи</div>
<div class="msg" style="left:1528px;top:549.4px;letter-spacing:1.28px">Курчатов</div>
<div class="msg" style="left:1528px;top:707.4px;letter-spacing:1.39px">Державинск</div>
<div class="msg" style="right:90.50px;top:312.7px;letter-spacing:1.5px;color:#333">ты</div>
<div class="msg" style="right:90.40px;top:470.2px;letter-spacing:1.6px;color:#333">иркутск</div>
<div class="msg" style="right:90.76px;top:628.1px;letter-spacing:1.24px;color:#333">волгоград</div>
</div></div>
<div class="a" style="left:1448px;top:69.5px;width:471px;height:64.5px;background:#9a9ea8"></div>
<div class="t" style="left:1491px;top:90.2px;font-size:27px;font-weight:700;letter-spacing:0.25px;color:#fff">Тестовый виджет</div>
<div class="a" style="left:1769px;top:82px;width:43px;height:43px;border-radius:50%;background:#2680c6;border:1px solid #2274b8"></div>
<svg class="a" style="left:1778px;top:91px" width="25" height="25" viewBox="0 0 25 25"><path d="M19.8 15.3 A7.2 7.2 0 1 1 17.3 7.5" fill="none" stroke="#fff" stroke-width="2.3"/><path d="M21.2 4.9 L21.2 12.1 L14 12.1 Z" fill="#fff"/></svg>
<svg class="a" style="left:1865px;top:88px" width="27" height="27" viewBox="0 0 27 27"><path d="M3.5 3.5 L23.5 23.5 M23.5 3.5 L3.5 23.5" stroke="#fff" stroke-width="2.6"/></svg>
<div class="a" style="left:1448px;top:748px;width:471px;height:1px;background:#d9d9d9"></div>
<div class="a" style="left:1910px;top:617px;width:7px;height:129px;border-radius:3.5px;background:#bcbec1"></div>
<div class="t" style="left:1491.5px;top:797.1px;font-size:21px;letter-spacing:0.4px;color:#acacac">Введите текст запроса</div>
<svg class="a" style="left:1772px;top:778px" width="56" height="54" viewBox="0 0 56 54"><path d="M7.6 24 L48.6 6.1 L30.7 47 L22.5 33 Z M22.5 33 L48.6 6.1" fill="none" stroke="#4a90e2" stroke-width="2.8" stroke-linejoin="round"/></svg>
<svg class="a" style="left:1848px;top:778px" width="56" height="54" viewBox="0 0 56 54"><path d="M25.8 44 L44.8 21.8 A9.1 9.1 0 0 0 32 9 L8.5 36.5 A6.2 6.2 0 0 0 17.3 45.3 L37.3 22.2 A3.4 3.4 0 0 0 32.5 17.4 L17.3 34.3" fill="none" stroke="#4a90e2" stroke-width="2.6" stroke-linecap="round"/></svg>


</body></html>
